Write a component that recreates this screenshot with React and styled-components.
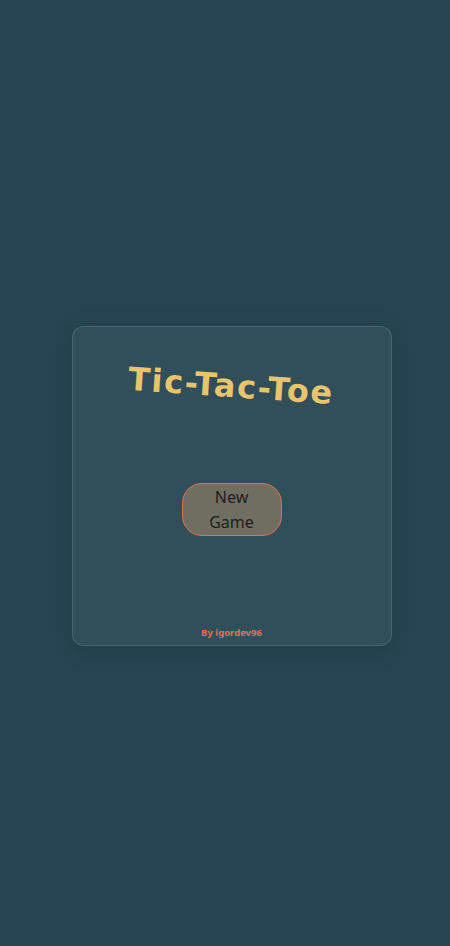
import React from 'react'
import styled, { createGlobalStyle } from 'styled-components'

const GlobalStyle = createGlobalStyle`
  * {
    box-sizing: border-box;
  }
  body {
    margin: 0;
    background: #264653;
    font-family: "Noto Sans", "Open Sans", sans-serif;
  }
`

const Page = styled.div`
  min-height: 100vh;
  display: flex;
  align-items: center;
  justify-content: center;
  padding: 26px 0 0 13px;
`

const Card = styled.div`
  width: 320px;
  height: 320px;
  display: flex;
  flex-direction: column;
  align-items: center;
  background: rgba(255, 255, 255, 0.05);
  border: 1px solid rgba(255, 255, 255, 0.12);
  border-radius: 12px;
  box-shadow: 0 4px 24px rgba(0, 0, 0, 0.15);
  padding: 40px 0 6px;
`

const Title = styled.h1`
  margin: 0;
  font-family: "DejaVu Sans", "Noto Sans", sans-serif;
  font-size: 32px;
  font-weight: 700;
  color: #e9c46a;
  transform: rotate(4deg);
  letter-spacing: 1.6px;
`

const Board = styled.div`
  flex: 1;
  display: flex;
  align-items: center;
  justify-content: center;
  padding-bottom: 12px;
`

const Button = styled.button`
  width: 100px;
  padding: 1px 14px 0;
  border-radius: 20px;
  border: 1px solid #e76f51;
  background: #6f6e60;
  color: #1e1e1e;
  font-family: "Noto Sans", sans-serif;
  font-size: 16px;
  line-height: 25px;
  cursor: pointer;
`

const Footer = styled.footer`
  font-size: 9.5px;
  font-weight: 700;
  color: #e76f51;
`

export default function App() {
  return (
    <>
      <GlobalStyle />
      <Page>
        <Card>
          <Title>Tic-Tac-Toe</Title>
          <Board>
            <Button>New Game</Button>
          </Board>
          <Footer>By igordev96</Footer>
        </Card>
      </Page>
    </>
  )
}
